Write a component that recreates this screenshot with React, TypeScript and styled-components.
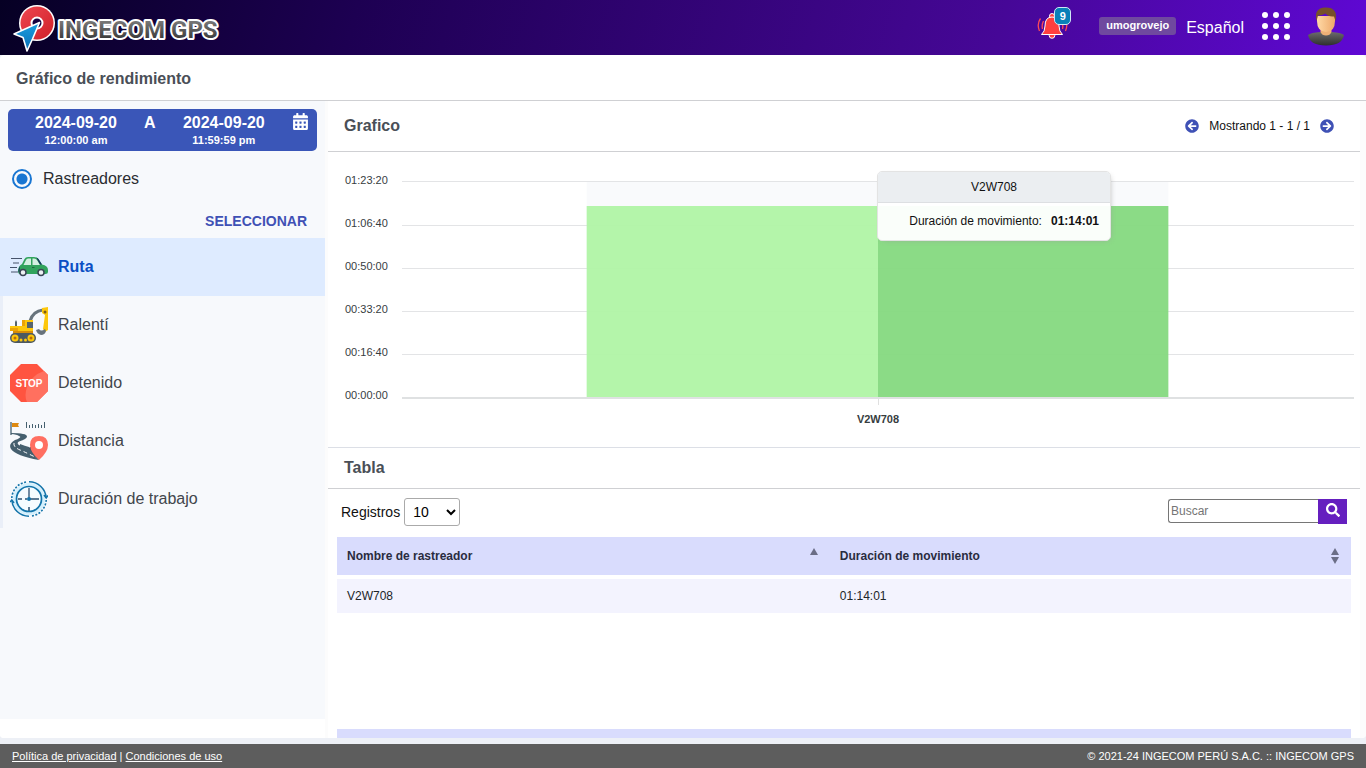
import React from "react";
import styled, { createGlobalStyle } from "styled-components";
import {
  FaArrowCircleLeft,
  FaArrowCircleRight,
  FaCalendarAlt,
  FaSearch,
} from "react-icons/fa";

const GlobalStyle = createGlobalStyle`
  * { box-sizing: border-box; }
  body {
    margin: 0;
    background: #edf0f6;
    color: #212529;
    font-family: "Liberation Sans", Arial, sans-serif;
    font-size: 12px;
  }
  button { font: inherit; border: 0; padding: 0; background: none; cursor: pointer; }
  h1, h2 { margin: 0; font-size: 16px; line-height: 24px; color: #4a4f57; }
`;

const Page = styled.div`
  display: flex;
  flex-direction: column;
  height: 100vh;
`;

/* ---------- top bar ---------- */

const TopBar = styled.header`
  display: flex;
  align-items: center;
  justify-content: space-between;
  flex: none;
  height: 55px;
  padding: 0 22px 0 10px;
  background: linear-gradient(105deg, #060024 0%, #1d0052 26%, #460797 73%, #5f08d4 100%);
`;

const Tools = styled.div`
  display: flex;
  align-items: center;
`;

const BellButton = styled.button`
  position: relative;
  display: block;
  margin-right: 31px;
`;

const Count = styled.span`
  position: absolute;
  top: -6px;
  right: -3px;
  width: 17px;
  height: 18px;
  border: 1px solid #cfe8f6;
  border-radius: 5px;
  background: #0a80b8;
  color: #fff;
  font-size: 11px;
  font-weight: bold;
  line-height: 16px;
  text-align: center;
`;

const UserTag = styled.span`
  height: 18px;
  margin: 0 10px 4px 0;
  padding: 0 7px;
  border-radius: 3px;
  background: #6f499f;
  color: #fff;
  font-size: 11px;
  font-weight: bold;
  line-height: 17px;
`;

const Language = styled.button`
  margin-right: 18px;
  color: #fff;
  font-size: 16px;
  line-height: 24px;
`;

const IconButton = styled.button`
  display: block;
  margin-left: ${(p: { $gap?: number }) => p.$gap ?? 0}px;
`;

/* ---------- page frame ---------- */

const Panel = styled.main`
  display: flex;
  flex-direction: column;
  flex: 1;
  min-height: 0;
  margin-bottom: 6px;
  border-radius: 4px;
  background: #fff;
  overflow: hidden;
`;

const TitleBar = styled.div`
  display: flex;
  align-items: center;
  flex: none;
  height: 46px;
  padding: 3px 16px 0;
  border-bottom: 1px solid #cfd0d3;
`;

const Columns = styled.div`
  display: flex;
  flex: 1;
  min-height: 0;
  padding-right: 6px;
  background: #fcfcfc;
`;

const SidebarColumn = styled.div`
  flex: none;
  width: 325px;
  margin-right: 3px;
  padding-bottom: 19px;
  background: #fff;
`;

const Sidebar = styled.aside`
  height: 100%;
  padding-top: 8px;
  background: #f7f9fc;
`;

const DateRange = styled.button`
  display: flex;
  justify-content: space-between;
  align-items: flex-start;
  width: calc(100% - 16px);
  height: 42px;
  margin: 0 8px;
  padding: 4px 8px 0 27px;
  border-radius: 5px;
  background: #3a56b8;
  color: #fff;
  font-size: 16px;
  font-weight: bold;
  line-height: 19px;
`;

const DateStamp = styled.span`
  display: flex;
  flex-direction: column;
  align-items: center;
`;

const Time = styled.small`
  font-size: 11px;
  line-height: 16px;
`;

const RadioLabel = styled.label`
  display: flex;
  align-items: center;
  gap: 11px;
  height: 32px;
  margin: 12px 12px 10px;
  font-size: 16px;
  color: #2a2d31;
`;

const Radio = styled.input`
  appearance: none;
  width: 20px;
  height: 20px;
  margin: 0;
  border: 2px solid #1976d2;
  border-radius: 50%;
  background: radial-gradient(circle, #1976d2 5px, transparent 6px);
`;

const SelectRow = styled.div`
  display: flex;
  justify-content: flex-end;
  padding: 5px 18px 5px 0;
`;

const SelectButton = styled.button`
  color: #3f51b5;
  font-size: 14px;
  font-weight: bold;
  line-height: 23px;
`;

const Menu = styled.nav`
  display: flex;
  flex-direction: column;
`;

const MenuItem = styled.a<{ $active?: boolean }>`
  display: flex;
  align-items: center;
  gap: 10px;
  height: 58px;
  padding-left: 7px;
  border-left: 3px solid ${(p) => (p.$active ? "#deebff" : "#eaeff8")};
  background: ${(p) => (p.$active ? "#deebff" : "transparent")};
  color: ${(p) => (p.$active ? "#0b4fc4" : "#42464c")};
  font-size: 16px;
  font-weight: ${(p) => (p.$active ? "bold" : "normal")};
  text-decoration: none;
`;

const Content = styled.div`
  display: flex;
  flex-direction: column;
  flex: 1;
  min-width: 0;
  overflow: hidden;
  background: #fff;
`;

const SectionHead = styled.div<{ $height: number }>`
  display: flex;
  align-items: center;
  justify-content: space-between;
  flex: none;
  height: ${(p) => p.$height}px;
  padding: 0 26px 0 16px;
  border-bottom: 1px solid #cfd0d3;
`;

const Pager = styled.div`
  display: flex;
  align-items: center;
  gap: 10px;
  color: #111;
`;

const PagerButton = styled.button`
  display: flex;
  color: #3f51b5;
`;

/* ---------- chart ---------- */

const Chart = styled.div`
  display: flex;
  flex: none;
  height: 296px;
  padding: 7px 6px 0 17px;
  border-bottom: 1px solid #dcdfe6;
`;

const AxisLabels = styled.div`
  width: 57px;
  color: #373d3f;
  font-size: 11px;
  line-height: 43px;
`;

const Plot = styled.div`
  position: relative;
  flex: 1;
  padding-top: 22px;
`;

const PlotSvg = styled.svg`
  display: block;
  width: 100%;
  height: 226px;
  overflow: visible;
`;

const Category = styled.div`
  color: #373d3f;
  font-size: 11px;
  font-weight: bold;
  line-height: 24px;
  text-align: center;
`;

const Tooltip = styled.div`
  position: absolute;
  top: 12px;
  left: 50%;
  width: 234px;
  margin-left: -1px;
  border: 1px solid #e3e3e3;
  border-radius: 5px;
  background: rgba(255, 255, 255, 0.96);
  box-shadow: 2px 2px 6px -4px #999;
  overflow: hidden;
  color: #111;
`;

const TooltipTitle = styled.div`
  height: 31px;
  border-bottom: 1px solid #dddfe2;
  background: #ebeef1;
  line-height: 30px;
  text-align: center;
`;

const TooltipBody = styled.div`
  display: flex;
  justify-content: flex-end;
  gap: 9px;
  height: 37px;
  padding-right: 11px;
  line-height: 37px;
`;

/* ---------- table ---------- */

const TableTools = styled.div`
  display: flex;
  align-items: center;
  justify-content: space-between;
  flex: none;
  height: 48px;
  padding: 0 13px 2px;
`;

const LengthLabel = styled.label`
  display: flex;
  align-items: center;
  gap: 4px;
  color: #111;
  font-size: 14px;
`;

const LengthSelect = styled.select`
  width: 56px;
  height: 28px;
  padding: 4px;
  border: 1px solid #aaa;
  border-radius: 3px;
  background: #fff;
  font: inherit;
`;

const Search = styled.form`
  display: flex;
  align-items: flex-start;
  height: 27px;
`;

const SearchInput = styled.input`
  width: 150px;
  height: 24px;
  padding: 0 2px;
  border: 1px solid #767676;
  border-right: 0;
  border-radius: 3px 0 0 3px;
  font: inherit;
`;

const SearchButton = styled.button`
  display: flex;
  justify-content: center;
  width: 29px;
  height: 25px;
  padding-top: 4px;
  background: #651fbf;
  color: #fff;
`;

const TableArea = styled.div`
  display: flex;
  flex-direction: column;
  justify-content: space-between;
  flex: 1;
  min-height: 0;
  padding: 0 9px;
`;

const Table = styled.table`
  width: 100%;
  table-layout: fixed;
  border-collapse: separate;
  border-spacing: 0;
`;

const HeadCell = styled.th<{ $width: string }>`
  width: ${(p) => p.$width};
  height: 38px;
  padding: 0 11px 0 10px;
  background: #d9dcfd;
  color: #2a2c40;
  text-align: left;
`;

const HeadInner = styled.div`
  display: flex;
  align-items: center;
  justify-content: space-between;
`;

const Cell = styled.td`
  height: 38px;
  padding: 0 10px;
  border-top: 4px solid #fff;
  background: #f3f3fe;
`;

const NextHead = styled.div`
  flex: none;
  height: 9px;
  background: #d9dcfd;
`;

const Footer = styled.footer`
  display: flex;
  align-items: center;
  justify-content: space-between;
  flex: none;
  height: 24px;
  padding: 0 12px;
  background: #5d5d5d;
  color: #fff;
  font-size: 11px;
`;

const FooterLink = styled.a`
  color: inherit;
`;

/* ---------- drawings ---------- */

const Logo = () => (
  <svg width="216" height="52" viewBox="10 0 216 52" role="img" aria-label="INGECOM GPS">
    <defs>
      <linearGradient id="logoText" x1="0" y1="0" x2="0" y2="1">
        <stop offset="0.2" stopColor="#777" />
        <stop offset="0.8" stopColor="#3c3c3c" />
      </linearGradient>
      <linearGradient id="logoRing" x1="0" y1="0" x2="1" y2="1">
        <stop offset="0" stopColor="#ee4650" />
        <stop offset="1" stopColor="#cf2029" />
      </linearGradient>
      <linearGradient id="logoArrow" x1="0" y1="0" x2="0" y2="1">
        <stop offset="0" stopColor="#1b9ee0" />
        <stop offset="1" stopColor="#0a6fb5" />
      </linearGradient>
    </defs>
    <circle cx="37" cy="21" r="18" fill="#fff" />
    <circle cx="37" cy="21" r="16.500" fill="url(#logoRing)" />
    <circle cx="37" cy="21" r="5.500" fill="#15003f" stroke="#fff" strokeWidth="2" />
    <path
      d="M39.500 20.500L14 32L23 35.500L27 49L32.500 37Z"
      fill="url(#logoArrow)"
      stroke="#fff"
      strokeWidth="1.600"
      strokeLinejoin="round"
    />
    <text
      x="58"
      y="36"
      fontFamily="Roboto, sans-serif"
      fontWeight="bold"
      fontSize="24"
      fill="url(#logoText)"
      stroke="#fff"
      strokeWidth="4"
      strokeLinejoin="round"
      paintOrder="stroke"
    >
      INGECOM GPS
    </text>
  </svg>
);

const Bell = () => (
  <svg width="31" height="26" viewBox="0 0 31 26" fill="none">
    <path d="M3.500 5.500Q-.5 11 2.500 18M6.500 8Q4.500 12 5.500 16M27.500 5.500Q31.500 11 28.500 18M24.500 8Q26.500 12 25.500 16" stroke="#ff4b55" strokeWidth="1.300" />
    <circle cx="15" cy="22.500" r="2.800" fill="#ff3f3f" stroke="#fff" />
    <circle cx="15" cy="3" r="2.500" fill="#ff3f3f" stroke="#fff" />
    <path d="M4.500 21.500Q8 18.500 8 13Q8 4 15 4Q22 4 22 13Q22 18.500 25.500 21.500Z" fill="#ff3f3f" stroke="#fff" strokeLinejoin="round" />
  </svg>
);

const Dots = () => (
  <svg width="28" height="28" viewBox="0 0 28 28" fill="#fff">
    {[3, 14, 25].map((y) => [3, 14, 25].map((x) => <circle key={`${x}-${y}`} cx={x} cy={y} r="3" />))}
  </svg>
);

const Avatar = () => (
  <svg width="36" height="39" viewBox="0 0 36 39">
    <defs>
      <linearGradient id="shirt" x1="0" y1="0" x2="0" y2="1">
        <stop offset="0" stopColor="#6b6b6b" />
        <stop offset="1" stopColor="#2e2e2e" />
      </linearGradient>
      <linearGradient id="skin" x1="0" y1="0" x2="1" y2="0">
        <stop offset="0" stopColor="#ffd9a6" />
        <stop offset="1" stopColor="#eda869" />
      </linearGradient>
    </defs>
    <path d="M0 28Q3 25.500 12 25H24Q33 25.500 36 28Q34 38.500 18 38.500Q2 38.500 0 28Z" fill="url(#shirt)" />
    <path d="M12.500 19H23.500V25Q22 28.500 18 28.500Q14 28.500 12.500 25Z" fill="#eeb077" />
    <path d="M9 9H27V14Q27 24.500 18 25Q9 24.500 9 14Z" fill="url(#skin)" />
    <path d="M8.500 14Q5.500 1 17 .5Q30.500 0 27.500 14L26 9.500Q20 10 17.500 6.500Q13 9 10 8.500Z" fill="#77502a" />
  </svg>
);

const CarIcon = () => (
  <svg width="38" height="38" viewBox="0 0 38 38">
    <path d="M1 10.500H12M3 15H9M0 19.500H7M1 24H8" stroke="#46536b" strokeWidth="1" />
    <path d="M9 26Q7 23 9 19Q10 17 12 16L14.500 11Q15.500 9 18 9H24Q27 9 28.500 11L32 16.500Q38 17.500 38 22V24Q38 26 35.500 26Z" fill="#31a35d" />
    <path d="M13.500 17L16 12Q16.500 10.500 18 10.500H21V17ZM22.500 17V10.500H24Q26 10.500 27 12L30 17Z" fill="#d3efe2" />
    <path d="M26.500 9.500Q28 10 28.500 11L32 16.500H30L27.500 12ZM8.500 24Q8 21 10 18L9.500 25Z" fill="#17375e" />
    <path d="M22 19.500H24.500" stroke="#1c6b3c" />
    <circle cx="13" cy="24.500" r="3" fill="#eef2f4" stroke="#3a4555" strokeWidth="1.500" />
    <circle cx="31" cy="24.500" r="3" fill="#eef2f4" stroke="#3a4555" strokeWidth="1.500" />
  </svg>
);

const ExcavatorIcon = () => (
  <svg width="38" height="38" viewBox="0 0 38 38">
    <path d="M20 15Q23 5 33 4" fill="none" stroke="#67737c" strokeWidth="3" />
    <path d="M5 20V16L6 14L7 16V20Z" fill="#56646e" />
    <path d="M0 20H12V14H23V25H0Z" fill="#fdc70c" />
    <path d="M0 22H8V25H0ZM12 14H15V20H12Z" fill="#eba308" />
    <rect x="17" y="16" width="6" height="6" fill="#56646e" />
    <path d="M32 2L38 1V24L35 26L33 23L35 9L32 7Z" fill="#fdc70c" />
    <circle cx="35" cy="6" r="1.500" fill="#7b5b16" />
    <path d="M26 24L29 23Q31 26 35 23L36 25Q35 29 31 29Q27 28 26 24Z" fill="#67737c" />
    <path d="M3 25H23V28H3Z" fill="#d78d08" />
    <rect x="0" y="27" width="26" height="10" rx="5" fill="#4d5961" />
    <g fill="#fdc70c">
      <circle cx="5" cy="32" r="3.500" />
      <circle cx="21" cy="32" r="3.500" />
      <circle cx="11" cy="34" r="1.500" />
      <circle cx="15.500" cy="34" r="1.500" />
    </g>
    <g fill="#b86d08">
      <circle cx="5" cy="32" r="1.500" />
      <circle cx="21" cy="32" r="1.500" />
    </g>
  </svg>
);

const StopIcon = () => (
  <svg width="38" height="38" viewBox="0 0 38 38">
    <path d="M11 0H27L38 11V27L27 38H11L0 27V11Z" fill="#ff5440" />
    <path d="M34 7L38 11V27L27 38H17Q14 32 17 23Q22 11 34 7Z" fill="#ff705f" />
    <text x="19" y="23" fill="#fff" fontSize="10" fontWeight="bold" textAnchor="middle">
      STOP
    </text>
  </svg>
);

const RoadIcon = () => (
  <svg width="38" height="38" viewBox="0 0 38 38">
    <path d="M1 0V13" stroke="#45606f" strokeWidth="1.300" />
    <path d="M2 1H9L8 3L9 5H2Z" fill="#dd8910" />
    <path d="M16.500 0V6M19.500 3V6M22.500 2V6M25.500 3V6M28.500 2V6M31.500 3V6M34.500 0V6" stroke="#45606f" />
    <path d="M1 11Q17 11 17 14.500Q17 17 9 19.500Q5 22 13 25L29 38Q6 34 1 27Q-2 22 5 18Q13 15 9 14Q7 12.500 1 12Z" fill="#455f6e" />
    <path d="M10 22Q15 24 19 25L29 38Q20 32 10 25Z" fill="#455f6e" />
    <path d="M4 21Q3 25 10 28Q17 31 25 35" fill="none" stroke="#fff" strokeWidth="1" strokeDasharray="4 3" />
    <path d="M19 26L29 38L22 24Z" fill="#344955" />
    <path d="M29 38Q20 30 20 23Q20 14 29 14Q38 14 38 23Q38 30 29 38Z" fill="#ff6f61" />
    <circle cx="29" cy="23" r="4" fill="#fff" />
  </svg>
);

const ClockIcon = () => (
  <svg width="38" height="38" viewBox="0 0 38 38" fill="none">
    <circle cx="19" cy="19" r="16" fill="#d3f0fd" />
    <circle cx="19" cy="19" r="12.500" fill="#f5fcff" stroke="#1274aa" strokeWidth="1.700" />
    <path d="M19 1.800A17.200 17.200 0 0 1 36.200 18M19 36.200A17.200 17.200 0 0 1 1.800 20" stroke="#1274aa" strokeWidth="1.600" />
    <path d="M1.800 18A17.200 17.200 0 0 1 17 1.800M36.200 20A17.200 17.200 0 0 1 21 36.200" stroke="#1274aa" strokeWidth="1.600" strokeDasharray="2 1.500" />
    <path d="M34 15L36.200 18L38 15.500M0 22L1.800 20L4 23" stroke="#1274aa" strokeWidth="1.500" />
    <path d="M19 8V19H29" stroke="#2a4f70" strokeWidth="1.300" />
    <path d="M19 27V31M8 19H12M15 19H17" stroke="#2a4f70" strokeWidth="1.500" />
    <circle cx="19" cy="19" r="2" fill="#1274aa" />
  </svg>
);

const SortMark = ({ both }: { both?: boolean }) => (
  <svg width="10" height="18" viewBox="0 0 10 18" fill="#6b6e86">
    <path d="M1 8L5 1L9 8Z" />
    {both && <path d="M1 10L5 17L9 10Z" />}
  </svg>
);

/* ---------- data ---------- */

const ticks = ["01:23:20", "01:06:40", "00:50:00", "00:33:20", "00:16:40", "00:00:00"];

const menu = [
  { label: "Ruta", Icon: CarIcon },
  { label: "Ralentí", Icon: ExcavatorIcon },
  { label: "Detenido", Icon: StopIcon },
  { label: "Distancia", Icon: RoadIcon },
  { label: "Duración de trabajo", Icon: ClockIcon },
];

export default function App() {
  return (
    <Page>
      <GlobalStyle />
      <TopBar>
        <Logo />
        <Tools>
          <BellButton aria-label="Notificaciones">
            <Bell />
            <Count>9</Count>
          </BellButton>
          <UserTag>umogrovejo</UserTag>
          <Language>Español</Language>
          <IconButton aria-label="Aplicaciones">
            <Dots />
          </IconButton>
          <IconButton $gap={18} aria-label="Cuenta">
            <Avatar />
          </IconButton>
        </Tools>
      </TopBar>

      <Panel>
        <TitleBar>
          <h1>Gráfico de rendimiento</h1>
        </TitleBar>
        <Columns>
          <SidebarColumn>
            <Sidebar>
              <DateRange>
                <DateStamp>
                  2024-09-20
                  <Time>12:00:00 am</Time>
                </DateStamp>
                <span>A</span>
                <DateStamp>
                  2024-09-20
                  <Time>11:59:59 pm</Time>
                </DateStamp>
                <FaCalendarAlt size={17} />
              </DateRange>
              <RadioLabel>
                <Radio type="radio" name="source" defaultChecked />
                Rastreadores
              </RadioLabel>
              <SelectRow>
                <SelectButton>SELECCIONAR</SelectButton>
              </SelectRow>
              <Menu>
                {menu.map(({ label, Icon }, i) => (
                  <MenuItem key={label} href="#" $active={i === 0}>
                    <Icon />
                    {label}
                  </MenuItem>
                ))}
              </Menu>
            </Sidebar>
          </SidebarColumn>

          <Content>
            <SectionHead $height={51}>
              <h2>Grafico</h2>
              <Pager>
                <PagerButton aria-label="Anterior">
                  <FaArrowCircleLeft size={14} />
                </PagerButton>
                Mostrando 1 - 1 / 1
                <PagerButton aria-label="Siguiente">
                  <FaArrowCircleRight size={14} />
                </PagerButton>
              </Pager>
            </SectionHead>

            <Chart>
              <AxisLabels>
                {ticks.map((t) => (
                  <div key={t}>{t}</div>
                ))}
              </AxisLabels>
              <Plot>
                <PlotSvg>
                  <rect x="19.4%" y="0" width="61.1%" height="216" fill="#f9fafc" />
                  {[0, 44, 87, 130, 173].map((y) => (
                    <rect key={y} x="0" y={y} width="100%" height="1" fill="#e3e4e6" />
                  ))}
                  <rect x="0" y="216" width="100%" height="2" fill="#dfe1e2" />
                  <rect x="50%" y="218" width="1" height="6" fill="#e0e0e0" />
                  <rect x="19.4%" y="25" width="30.6%" height="191" fill="#b0f4a5" fillOpacity="0.95" />
                  <rect x="50%" y="25" width="30.5%" height="191" fill="#85d980" fillOpacity="0.95" />
                </PlotSvg>
                <Category>V2W708</Category>
                <Tooltip>
                  <TooltipTitle>V2W708</TooltipTitle>
                  <TooltipBody>
                    <span>Duración de movimiento:</span>
                    <strong>01:14:01</strong>
                  </TooltipBody>
                </Tooltip>
              </Plot>
            </Chart>

            <SectionHead $height={41}>
              <h2>Tabla</h2>
            </SectionHead>
            <TableTools>
              <LengthLabel>
                Registros
                <LengthSelect defaultValue="10">
                  <option>10</option>
                  <option>25</option>
                  <option>50</option>
                </LengthSelect>
              </LengthLabel>
              <Search>
                <SearchInput type="text" placeholder="Buscar" aria-label="Buscar" />
                <SearchButton type="button" aria-label="Buscar">
                  <FaSearch size={14} />
                </SearchButton>
              </Search>
            </TableTools>
            <TableArea>
              <Table>
                <thead>
                  <tr>
                    <HeadCell $width="48.6%">
                      <HeadInner>
                        Nombre de rastreador
                        <SortMark />
                      </HeadInner>
                    </HeadCell>
                    <HeadCell $width="51.4%">
                      <HeadInner>
                        Duración de movimiento
                        <SortMark both />
                      </HeadInner>
                    </HeadCell>
                  </tr>
                </thead>
                <tbody>
                  <tr>
                    <Cell>V2W708</Cell>
                    <Cell>01:14:01</Cell>
                  </tr>
                </tbody>
              </Table>
              <NextHead />
            </TableArea>
          </Content>
        </Columns>
      </Panel>

      <Footer>
        <div>
          <FooterLink href="#">Política de privacidad</FooterLink> |{" "}
          <FooterLink href="#">Condiciones de uso</FooterLink>
        </div>
        <div>© 2021-24 INGECOM PERÚ S.A.C. :: INGECOM GPS</div>
      </Footer>
    </Page>
  );
}
